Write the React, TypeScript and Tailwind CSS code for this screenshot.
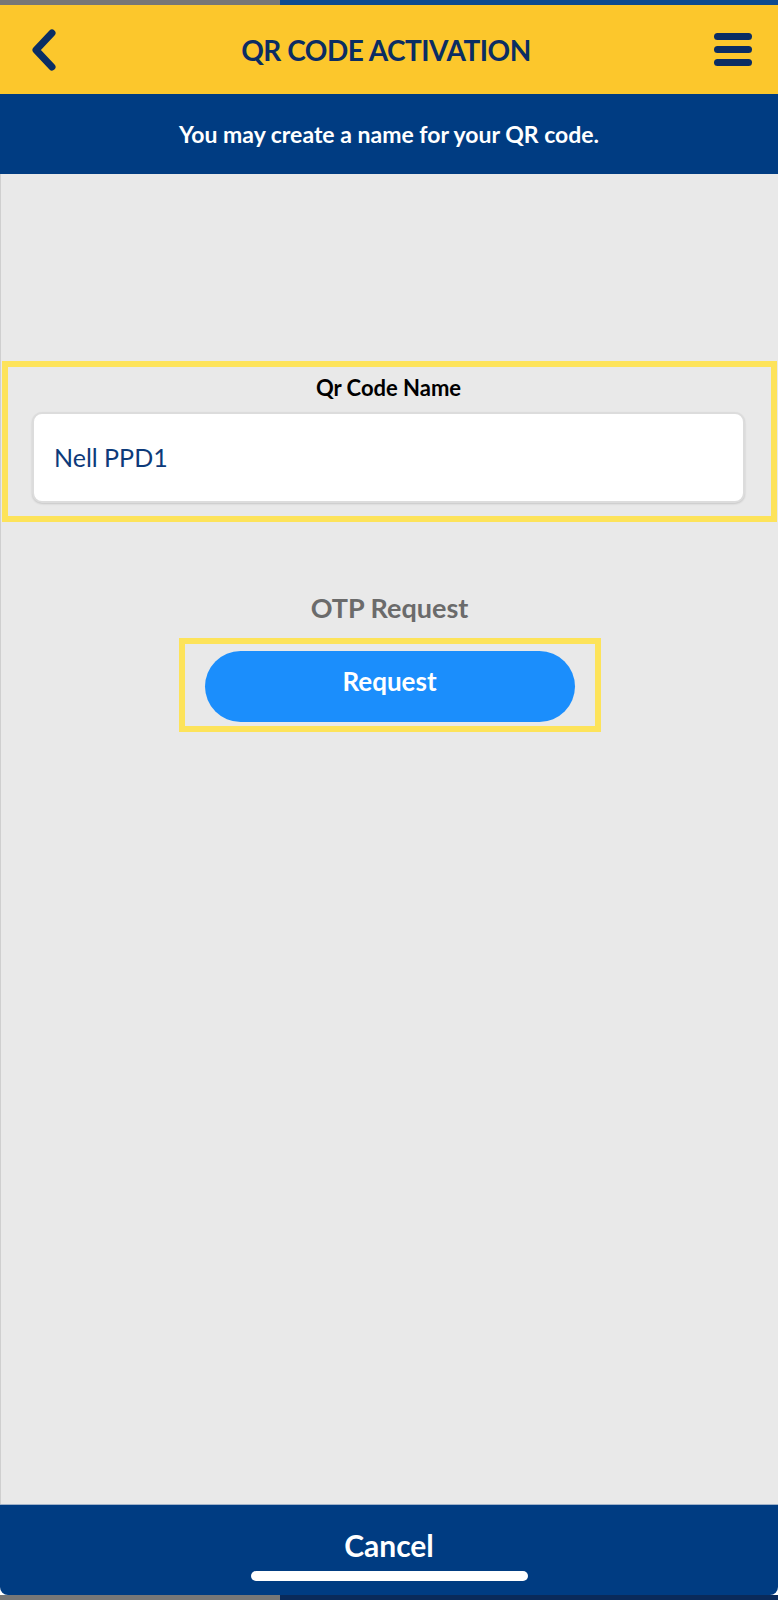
const font = "font-['Lato','Open_Sans',sans-serif]";

export default function App() {
  return (
    <div className={`flex h-[1600px] w-[778px] flex-col bg-white ${font}`}>
      {/* status strip */}
      <div className="flex h-[5px]">
        <div className="w-[280px] bg-[#777777]" />
        <div className="flex-1 bg-[#0d4a8f]" />
      </div>

      <header className="flex h-[89px] items-center justify-between bg-[#fcc72c] pl-[30px] pr-[26px]">
        <svg width="28" height="42" viewBox="0 0 28 42" aria-hidden="true">
          <path d="M22 4 L6 21 L22 38" fill="none" stroke="#0b2d63" strokeWidth="7" strokeLinecap="round" strokeLinejoin="round" />
        </svg>
        <h1 className="text-[28px] font-bold tracking-[-0.5px] text-[#0b2d63]">QR CODE ACTIVATION</h1>
        <div className="flex w-[38px] flex-col gap-[6px]">
          <span className="h-[7px] rounded-full bg-[#0b2d63]" />
          <span className="h-[7px] rounded-full bg-[#0b2d63]" />
          <span className="h-[7px] rounded-full bg-[#0b2d63]" />
        </div>
      </header>

      <div className="flex h-[80px] items-center justify-center bg-[#003c82]">
        <p className="text-[23px] font-bold text-white">You may create a name for your QR code.</p>
      </div>

      <main className="flex flex-1 flex-col border-l border-[#cfcfcf] bg-[#e9e9e9] pt-[187px]">
        <section className="mx-[1px] border-[6px] border-[#fde35a] pb-[13px] pl-[24px] pr-[26px] pt-[8px]">
          <p className="text-center text-[22px] leading-[26px] font-bold text-black">Qr Code Name</p>
          <div className="mt-[11px] flex h-[91px] items-center rounded-[10px] border-2 border-[#dcdcdc] bg-white px-[20px] shadow-[0_1px_2px_rgba(0,0,0,0.15)]">
            <span className="text-[25px] text-[#0d3a7a]">Nell PPD1</span>
          </div>
        </section>

        <p className="mt-[70px] text-center text-[27px] leading-[32px] font-bold text-[#6b6b6b]">OTP Request</p>

        <div className="mx-auto mt-[14px] w-[422px] border-[6px] border-[#fde35a] px-[20px] pb-[4px] pt-[7px]">
          <button className="flex h-[71px] w-full items-center justify-center rounded-full bg-[#1b8efc] pb-[10px] text-[26px] font-bold text-white">
            Request
          </button>
        </div>
      </main>

      <footer className="flex h-[91px] flex-col items-center rounded-b-[8px] border-t border-[#9fb1c9] bg-[#003c82] pt-[22px]">
        <span className="text-[30px] leading-[36px] font-bold text-white">Cancel</span>
        <span className="mt-[8px] h-[10px] w-[277px] rounded-full bg-white" />
      </footer>

      <div className="flex h-[5px]">
        <div className="w-[280px] bg-[#777777]" />
        <div className="flex-1 bg-[#0a2a5a]" />
      </div>
    </div>
  );
}
